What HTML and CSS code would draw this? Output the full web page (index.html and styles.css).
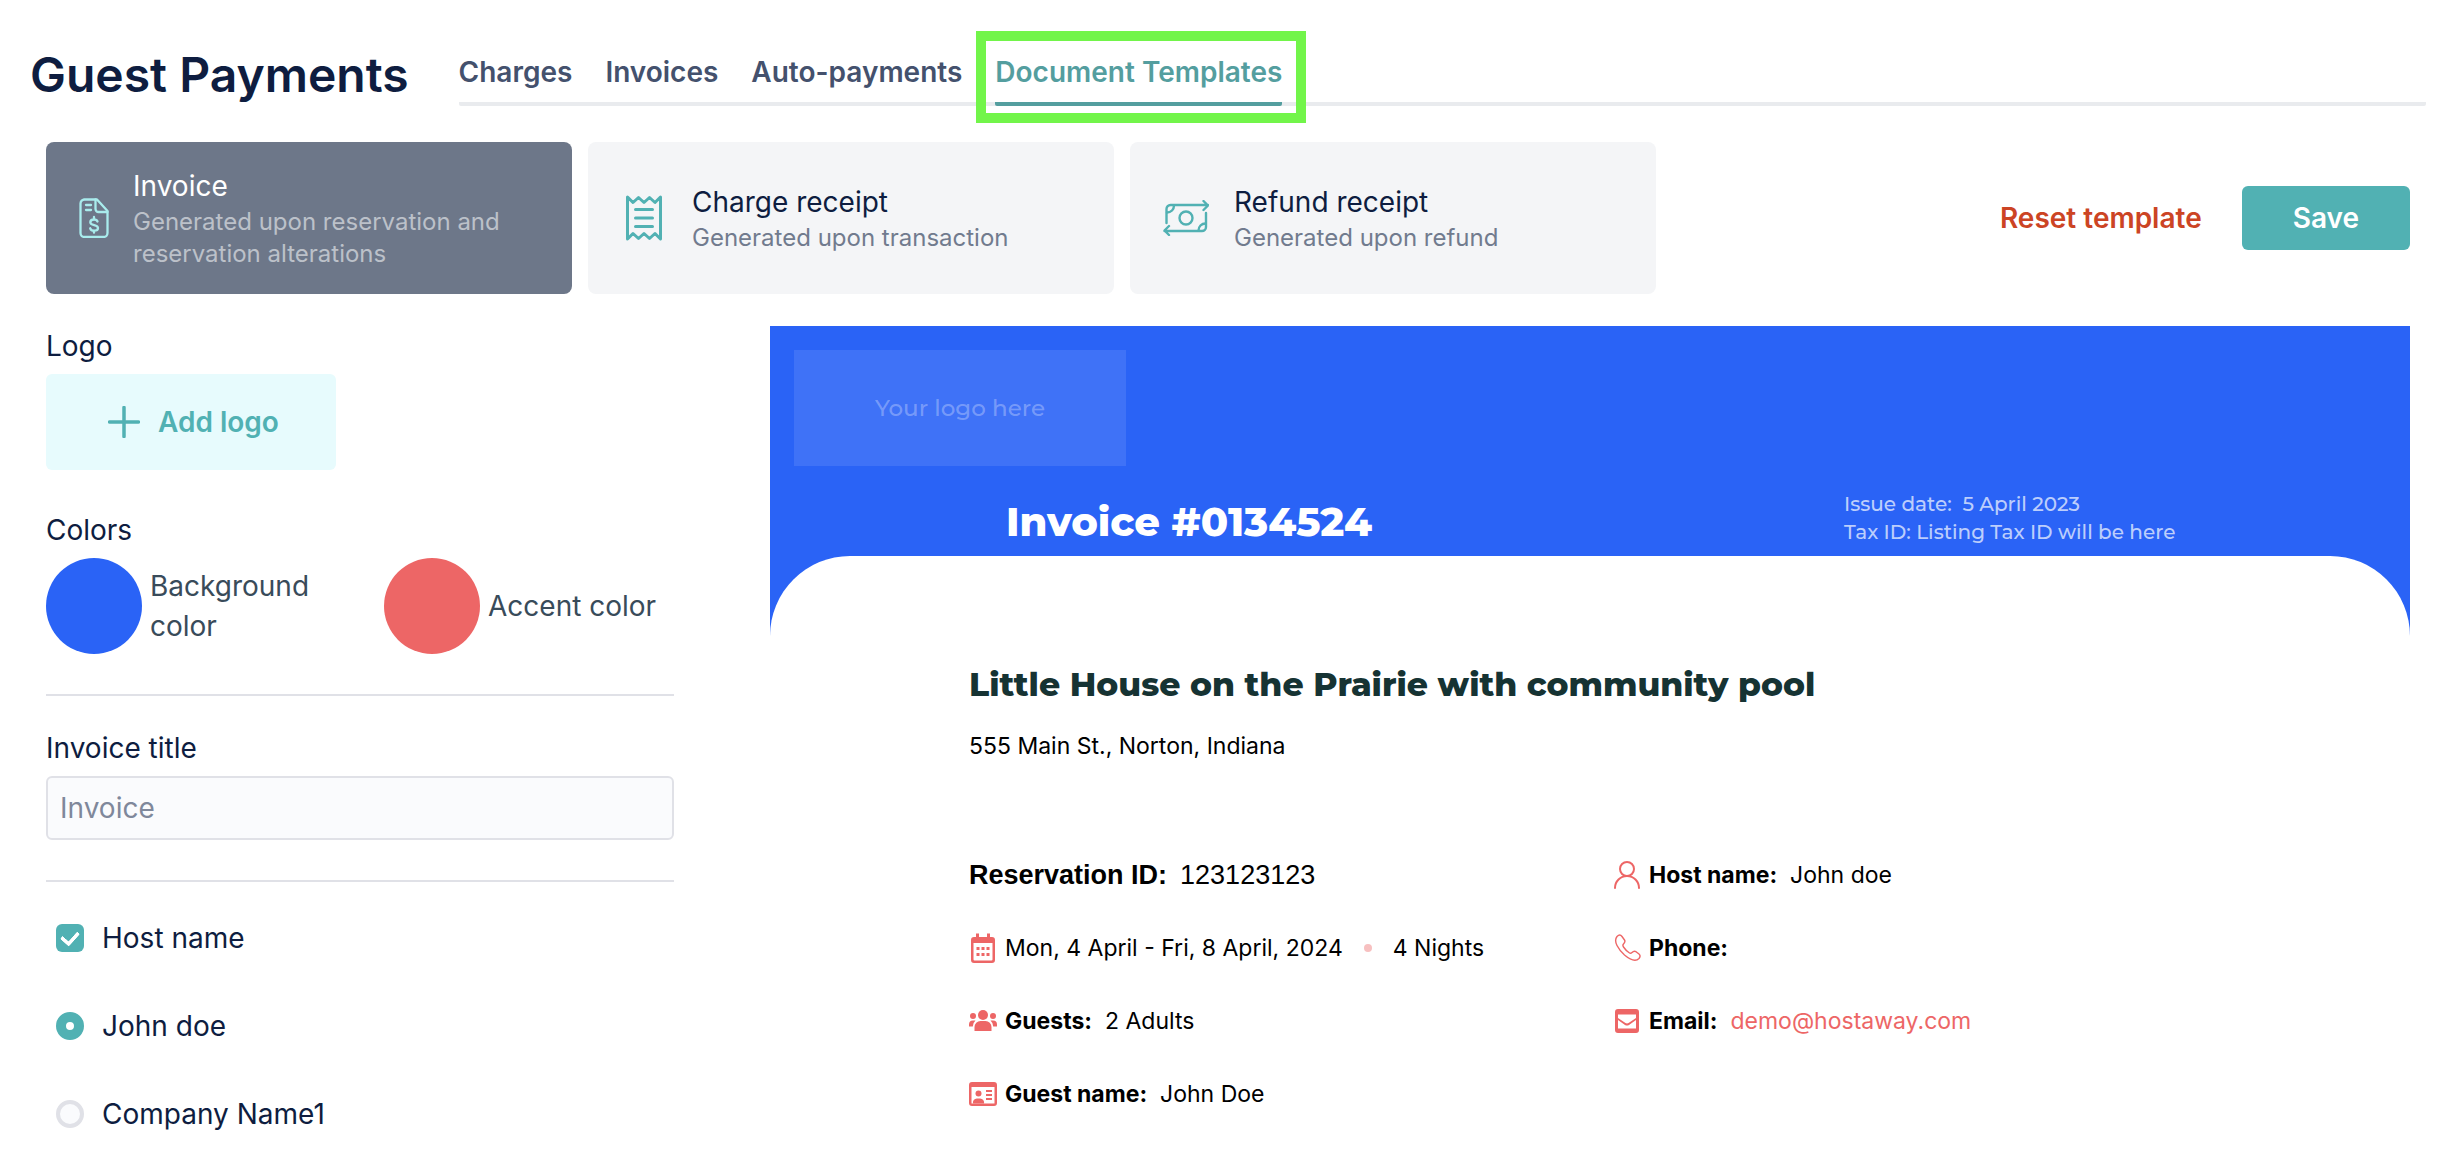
FILE: index.html
```html
<!DOCTYPE html>
<html lang="en">
<head>
<meta charset="utf-8">
<meta name="viewport" content="width=device-width, initial-scale=1">
<title>Guest Payments</title>
<link rel="stylesheet" href="styles.css">
</head>
<body>
<header class="page-header">
  <h1 class="page-title">Guest Payments</h1>
  <nav class="tabs">
    <a class="tab" href="#charges">Charges</a>
    <a class="tab" href="#invoices">Invoices</a>
    <a class="tab" href="#auto-payments">Auto-payments</a>
    <a class="tab tab-active" href="#templates" aria-current="page">Document Templates</a>
  </nav>
</header>

<main class="content">
  <div class="toolbar">
    <div class="doc-types">
      <button class="doc-card doc-card-active" type="button">
        <svg class="icon-invoice" viewBox="0 0 30 40" aria-hidden="true"><g fill="none" stroke="currentColor" stroke-width="2.300" stroke-linecap="round" stroke-linejoin="round"><path d="M5 1.500H18L28.500 13V35a4 4 0 0 1-4 4H5.500a4 4 0 0 1-4-4V5.500a4 4 0 0 1 4-4Z"/><path d="M16.500 1.500V11a3 3 0 0 0 3 3h9"/><path d="M7 7H12M7 12H12"/><path d="M18.500 23.500c-.5-1.300-2-2-3.500-2-2 0-3.700 1-3.700 2.700 0 4 7.700 1.800 7.700 5.800 0 1.700-1.700 2.700-3.800 2.700-2 0-3.500-.9-4-2.400M15 19v2.500M15 32.700V34.700"/></g></svg>
        <span class="doc-text"><span class="doc-name">Invoice</span><span class="doc-note">Generated upon reservation and reservation alterations</span></span>
      </button>
      <button class="doc-card" type="button">
        <svg class="icon-receipt" viewBox="0 0 36 46" aria-hidden="true"><g fill="none" stroke="currentColor" stroke-width="3" stroke-linecap="round"><path stroke-linejoin="round" d="M1.500 2V44L7 38.500L12.500 43.500L18 38.500L23.500 43.500L29 38.500L34.500 44V2L29 7.500L23.500 2.500L18 7.500L12.500 2.500L7 7.500Z"/><path d="M9.500 14.500H26.500M9.500 23H26.500M9.500 31.500H26.500"/></g></svg>
        <span class="doc-text"><span class="doc-name">Charge receipt</span><span class="doc-note">Generated upon transaction</span></span>
      </button>
      <button class="doc-card" type="button">
        <svg class="icon-refund" viewBox="0 0 46 36" aria-hidden="true"><g fill="none" stroke="currentColor" stroke-width="2.400" stroke-linecap="round" stroke-linejoin="round"><path d="M3.500 23V9a4 4 0 0 1 4-4H45M40.500 1L45 5.500L40.500 10"/><path d="M43 13V27a4 4 0 0 1-4 4H1.500M6 35L1.500 30.500L6 26"/><path d="M11 5.500C11 9.500 8 12.500 4 12.500M35.500 30.500C35.500 26.500 38.500 23.500 42.500 23.500"/><circle cx="23" cy="18" r="6.500"/></g></svg>
        <span class="doc-text"><span class="doc-name">Refund receipt</span><span class="doc-note">Generated upon refund</span></span>
      </button>
    </div>
    <div class="actions">
      <button class="btn-reset" type="button">Reset template</button>
      <button class="btn-save" type="button">Save</button>
    </div>
  </div>

  <div class="editor">
    <form class="settings">
      <section class="field">
        <h2 class="field-label">Logo</h2>
        <button class="btn-logo" type="button"><svg class="icon-plus" viewBox="0 0 32 32" aria-hidden="true"><path d="M16 1.500V30.500M1.500 16H30.500" fill="none" stroke="currentColor" stroke-width="3.500" stroke-linecap="round"/></svg>Add logo</button>
      </section>
      <section class="field field-colors">
        <h2 class="field-label">Colors</h2>
        <div class="colors">
          <label class="color"><input class="swatch" type="color" value="#2a63f6"><span>Background color</span></label>
          <label class="color"><input class="swatch" type="color" value="#ed6666"><span>Accent color</span></label>
        </div>
      </section>
      <section class="field field-ruled">
        <label class="field-label" for="invoice-title">Invoice title</label>
        <input class="text-input" id="invoice-title" type="text" placeholder="Invoice">
      </section>
      <section class="options">
        <label class="option"><input class="check" type="checkbox" checked>Host name</label>
        <label class="option"><input class="radio" type="radio" name="host" checked>John doe</label>
        <label class="option"><input class="radio" type="radio" name="host">Company Name1</label>
      </section>
    </form>

    <article class="preview">
      <header class="preview-head">
        <div class="logo-slot">Your logo here</div>
        <div class="preview-meta">
          <h2 class="invoice-number">Invoice #0134524</h2>
          <p class="invoice-info">Issue date:&nbsp; 5 April 2023<br>Tax ID: Listing Tax ID will be here</p>
        </div>
      </header>
      <div class="preview-body">
        <h3 class="listing">Little House on the Prairie with community pool</h3>
        <p class="address">555 Main St., Norton, Indiana</p>
        <div class="details">
          <ul class="detail-list">
            <li class="detail detail-id"><b>Reservation ID:</b>123123123</li>
            <li class="detail"><svg class="icon" viewBox="0 0 28 32" aria-hidden="true"><path fill="currentColor" fill-rule="evenodd" d="M7 1.500h3V5h8V1.500h3V5h2a3 3 0 0 1 3 3V28a3 3 0 0 1-3 3H5a3 3 0 0 1-3-3V8a3 3 0 0 1 3-3h2ZM4.500 11V27.500a1 1 0 0 0 1 1h17a1 1 0 0 0 1-1V11Z"/><path fill="none" stroke="currentColor" stroke-width="3" stroke-dasharray="3 2" d="M7.500 16.500H21M7.500 22.500H21"/></svg>Mon, 4 April - Fri, 8 April, 2024<span class="dot"></span>4 Nights</li>
            <li class="detail"><svg class="icon" viewBox="0 0 28 32" aria-hidden="true"><g fill="currentColor"><circle cx="14" cy="10" r="5"/><circle cx="4" cy="11" r="3"/><circle cx="24" cy="11" r="3"/><path d="M5.500 26V22a6 6 0 0 1 6-6h5a6 6 0 0 1 6 6v4ZM0 21.500v-2a4 4 0 0 1 4-4h2.500a8 8 0 0 0-2.700 6ZM28 21.500v-2a4 4 0 0 0-4-4h-2.500a8 8 0 0 1 2.700 6Z"/></g></svg><b>Guests:</b>2 Adults</li>
            <li class="detail"><svg class="icon" viewBox="0 0 28 32" aria-hidden="true"><path fill="currentColor" fill-rule="evenodd" d="M3 4H25a3 3 0 0 1 3 3V25a3 3 0 0 1-3 3H3a3 3 0 0 1-3-3V7a3 3 0 0 1 3-3ZM2.500 9V25.500h23V9Z"/><circle cx="9.500" cy="15.500" r="3" fill="currentColor"/><path fill="currentColor" d="M4 25.500a4 4 0 0 1 4-5h3a4 4 0 0 1 4 5Z"/><path stroke="currentColor" stroke-width="1.800" d="M17 13H23M17 17H23M17 21H23"/></svg><b>Guest name:</b>John Doe</li>
          </ul>
          <ul class="detail-list">
            <li class="detail"><svg class="icon" viewBox="0 0 28 32" aria-hidden="true"><g fill="none" stroke="currentColor" stroke-width="2" stroke-linecap="round"><circle cx="14" cy="10" r="7"/><path d="M2 29a12 12 0 0 1 24 0"/></g></svg><b>Host name:</b>John doe</li>
            <li class="detail"><svg class="icon" viewBox="0 0 28 32" aria-hidden="true"><path fill="none" stroke="currentColor" stroke-width="1.400" stroke-linejoin="round" d="M4 4.500C6 2.500 7.500 2.500 9 4.500L11.500 8C12.500 9.500 12 10.500 10.500 12C9.500 13 9.500 13.500 10.500 15C12.500 18 14 19.500 16.500 21C17.500 21.600 18 21.500 19 20.500C20.500 19 21.500 18.700 23 19.700L26 22C27.500 23.200 27.500 24.500 26 26.500C23 29.500 18 28.500 11.500 23C5.500 17.500 0 9.500 4 4.500Z"/></svg><b>Phone:</b></li>
            <li class="detail"><svg class="icon" viewBox="0 0 28 32" aria-hidden="true"><path fill="currentColor" fill-rule="evenodd" d="M5 4H23a3 3 0 0 1 3 3V25a3 3 0 0 1-3 3H5a3 3 0 0 1-3-3V7a3 3 0 0 1 3-3ZM5 9.500V13L12.500 18a3 3 0 0 0 3 0L23 13V9.500ZM5 15V23.500H23V15L16 20a4 4 0 0 1-4 0Z"/></svg><b>Email:</b><a class="mail" href="mailto:demo@hostaway.com">demo@hostaway.com</a></li>
          </ul>
        </div>
      </div>
    </article>
  </div>
</main>
</body>
</html>
```
FILE: styles.css
```css
:root {
  --navy: #0e1d40;
  --slate: #44516d;
  --teal: #51b1b3;
  --teal-dark: #549e9f;
  --line: #e0e1e7;
  --brand: #2a63f6;
  --accent: #ed6666;
}

* {
  box-sizing: border-box;
  margin: 0;
  padding: 0;
}

body {
  background: #fff;
  color: var(--navy);
  font-family: Inter, "Liberation Sans", sans-serif;
  font-size: 28px;
  line-height: 40px;
}

button,
input {
  border: 0;
  font: inherit;
}

button {
  cursor: pointer;
}

svg {
  display: block;
  flex: none;
}

.page-header {
  display: flex;
  align-items: flex-end;
  gap: 50px;
  padding: 40px 16px 0 30px;
}

.page-title {
  font-size: 48px;
  font-weight: 600;
  line-height: 70px;
  white-space: nowrap;
}

.tabs {
  display: flex;
  flex: 1;
  gap: 33px;
  height: 54px;
  margin-bottom: 4px;
  border-bottom: 4px solid #e9ebee;
  border-radius: 2px;
}

.tab {
  position: relative;
  height: 54px;
  color: var(--slate);
  font-weight: 600;
  line-height: 40px;
  text-decoration: none;
  white-space: nowrap;
}

.tab-active {
  border-bottom: 4px solid var(--teal-dark);
  border-radius: 2px;
  color: var(--teal-dark);
}

.tab-active::after {
  position: absolute;
  inset: -21px -24px -21px -19px;
  border: 10px solid #72f54a;
  content: "";
}

.content {
  padding: 32px 32px 0 46px;
}

.toolbar {
  display: flex;
  align-items: center;
  justify-content: space-between;
}

.doc-types {
  display: grid;
  flex: 0 1 1610px;
  grid-template-columns: repeat(3, 1fr);
  gap: 16px;
}

.doc-card {
  display: flex;
  align-items: center;
  min-height: 152px;
  padding: 20px 33px;
  border-radius: 8px;
  background: #f4f5f7;
  color: var(--teal);
  text-align: left;
}

.doc-card-active {
  background: #6d7789;
  color: #a9eced;
}

.doc-text {
  display: flex;
  flex-direction: column;
}

.doc-name {
  color: var(--navy);
  line-height: 40px;
}

.doc-note {
  color: #717b8e;
  font-size: 24px;
  line-height: 32px;
}

.doc-card-active .doc-name {
  color: #fff;
}

.doc-card-active .doc-note {
  color: #bcc1c9;
}

.icon-invoice {
  width: 30px;
  height: 40px;
  margin-right: 24px;
}

.icon-receipt {
  width: 36px;
  height: 46px;
  margin: 0 30px 0 5px;
}

.icon-refund {
  width: 46px;
  height: 36px;
  margin-right: 25px;
}

.actions {
  display: flex;
  align-items: center;
  gap: 40px;
}

.btn-reset {
  background: none;
  color: #cc4424;
  font-weight: 600;
}

.btn-save {
  height: 64px;
  padding: 0 51px;
  border-radius: 6px;
  background: var(--teal);
  color: #fff;
  font-weight: 600;
}

.editor {
  display: flex;
  align-items: flex-start;
  gap: 96px;
  padding-top: 32px;
}

.settings {
  flex: 0 0 628px;
}

.field {
  display: flex;
  flex-direction: column;
  align-items: flex-start;
  gap: 8px;
  padding-bottom: 40px;
}

.field-label {
  font-size: 28px;
  font-weight: 400;
  line-height: 40px;
}

.btn-logo {
  display: flex;
  align-items: center;
  gap: 18px;
  width: 290px;
  height: 96px;
  padding-left: 62px;
  border-radius: 6px;
  background: #e7fbfd;
  color: var(--teal);
  font-weight: 600;
}

.icon-plus {
  width: 32px;
  height: 32px;
}

.field-colors,
.field-ruled {
  border-bottom: 2px solid var(--line);
}

.field-ruled {
  padding-top: 32px;
}

.colors {
  display: grid;
  grid-template-columns: 1fr 1fr;
  gap: 48px;
  width: 100%;
}

.color {
  display: flex;
  align-items: center;
  gap: 8px;
  color: #394b5a;
}

.swatch {
  flex: none;
  width: 96px;
  height: 96px;
  border-radius: 50%;
  overflow: hidden;
  appearance: none;
}

.swatch::-webkit-color-swatch-wrapper {
  padding: 0;
}

.swatch::-webkit-color-swatch {
  border: 0;
}

.text-input {
  width: 100%;
  height: 64px;
  padding: 0 12px;
  border: 2px solid var(--line);
  border-radius: 6px;
  background: #fafbfd;
  color: var(--navy);
}

.text-input::placeholder {
  color: #7f889b;
  opacity: 1;
}

.options {
  display: flex;
  flex-direction: column;
  gap: 48px;
  padding: 36px 10px 0;
}

.option {
  display: flex;
  align-items: center;
  gap: 18px;
}

.check,
.radio {
  display: grid;
  width: 28px;
  height: 28px;
  border: 4px solid var(--line);
  border-radius: 6px;
  background: #fafbfd;
  appearance: none;
  place-items: center;
}

.radio {
  border-radius: 50%;
}

.check:checked {
  border: 0;
  background: var(--teal);
}

.check:checked::before {
  width: 8px;
  height: 13px;
  margin-bottom: 4px;
  border: solid #fff;
  border-width: 0 4px 4px 0;
  border-radius: 2px;
  content: "";
  rotate: 42deg;
}

.radio:checked {
  border: 10px solid var(--teal);
  background: #fff;
}

.preview {
  flex: 1;
  min-width: 0;
  background: linear-gradient(var(--brand) 310px, #fff 310px);
}

.preview-head {
  padding: 24px 24px 0;
  color: #fff;
  font-family: Montserrat, Inter, sans-serif;
}

.logo-slot {
  display: grid;
  width: 332px;
  height: 116px;
  background: rgb(255 255 255 / 10%);
  color: rgb(255 255 255 / 30%);
  font-size: 23px;
  font-weight: 500;
  place-items: center;
}

.preview-meta {
  display: grid;
  grid-template-columns: 838px 1fr;
  align-items: end;
  height: 90px;
  padding: 0 0 10px 212px;
}

.invoice-number {
  font-size: 40px;
  font-weight: 800;
  line-height: 48px;
}

.invoice-info {
  color: rgb(255 255 255 / 70%);
  font-size: 20px;
  font-weight: 500;
  line-height: 28px;
}

.preview-body {
  padding: 104px 199px 40px;
  border-radius: 80px 80px 0 0;
  background: #fff;
  color: #000;
  font-size: 23px;
  line-height: 32px;
}

.listing {
  color: #163333;
  font-family: Montserrat, Inter, sans-serif;
  font-size: 33px;
  font-weight: 800;
  line-height: 48px;
}

.address {
  padding-top: 22px;
}

.details {
  display: grid;
  grid-template-columns: 644px 1fr;
  padding-top: 97px;
}

.detail-list {
  display: flex;
  flex-direction: column;
  gap: 41px;
  list-style: none;
}

.detail {
  display: flex;
  align-items: center;
  height: 32px;
  white-space: nowrap;
}

.detail b {
  margin-right: 13px;
  font-weight: 700;
}

.detail-id {
  font-family: "Liberation Sans", sans-serif;
  font-size: 27px;
}

.icon {
  width: 28px;
  height: 32px;
  margin-right: 8px;
  color: var(--accent);
}

.dot {
  width: 8px;
  height: 8px;
  margin: 0 21px;
  border-radius: 50%;
  background: #f7c0c0;
}

.mail {
  color: var(--accent);
  text-decoration: none;
}
```
